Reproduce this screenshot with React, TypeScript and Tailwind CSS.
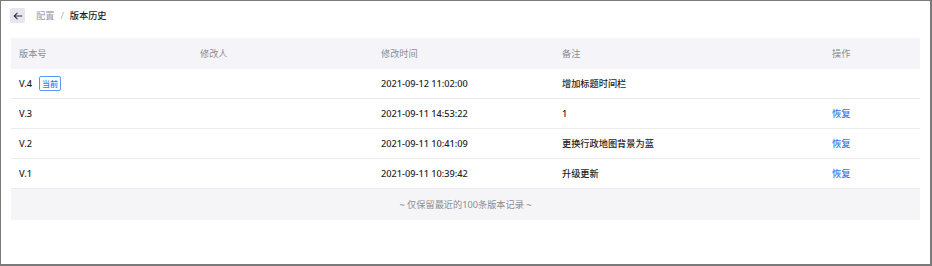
import React from "react";

const rows = [
  { v: "V.4", current: true, time: "2021-09-12 11:02:00", note: "增加标题时间栏" },
  { v: "V.3", current: false, time: "2021-09-11 14:53:22", note: "1" },
  { v: "V.2", current: false, time: "2021-09-11 10:41:09", note: "更换行政地图背景为蓝" },
  { v: "V.1", current: false, time: "2021-09-11 10:39:42", note: "升级更新" },
];

export default function App() {
  return (
    <div
      className="w-[932px] h-[266px] bg-white border border-[#7a7a7a] border-b-2 border-r-2 box-border text-[9.2px]"
      style={{ fontFamily: '"Noto Sans", "Noto Sans CJK SC", sans-serif' }}
    >
      <div className="flex items-center h-[28px] pl-[9px] pt-[1px]">
        <div className="w-[15px] h-[15px] bg-[#e6e6ee] rounded-[2px] flex items-center justify-center">
          <svg width="10" height="10" viewBox="0 0 10 10" fill="none" stroke="#333" strokeWidth="1.1">
            <path d="M9.2 5H1.2M4.4 1.8L1.2 5l3.2 3.2" />
          </svg>
        </div>
        <span className="ml-[11px] text-[#9a9aa3]">配置</span>
        <span className="ml-[6px] text-[#b0b0b8]">/</span>
        <span className="ml-[6px] text-[#1a1a1a] font-medium">版本历史</span>
      </div>
      <div className="mx-[10px] mt-[9px]">
        <div className="grid grid-cols-[181px_181px_181px_270px_1fr] h-[31px] items-center bg-[#f5f5f9] pl-[8px] text-[#8c8c94]">
          <div>版本号</div>
          <div>修改人</div>
          <div>修改时间</div>
          <div>备注</div>
          <div>操作</div>
        </div>
        {rows.map((r) => (
          <div
            key={r.v}
            className="grid grid-cols-[181px_181px_181px_270px_1fr] h-[30px] items-center pl-[8px] border-b border-[#ececf0] text-[#1f1f1f] font-medium"
          >
            <div className="flex items-center">
              <span>{r.v}</span>
              {r.current && (
                <span className="ml-[7px] w-[22px] h-[15px] flex items-center justify-center border border-[#5b95f5] text-[#2f7cf6] rounded-[2px] text-[8px] leading-none">
                  当前
                </span>
              )}
            </div>
            <div></div>
            <div>{r.time}</div>
            <div>{r.note}</div>
            <div className="text-[#2f7cf6]">{r.current ? "" : "恢复"}</div>
          </div>
        ))}
        <div className="h-[31px] flex items-center justify-center bg-[#f5f5f7] text-[#8c8c94]">
          ~ 仅保留最近的100条版本记录 ~
        </div>
      </div>
    </div>
  );
}
